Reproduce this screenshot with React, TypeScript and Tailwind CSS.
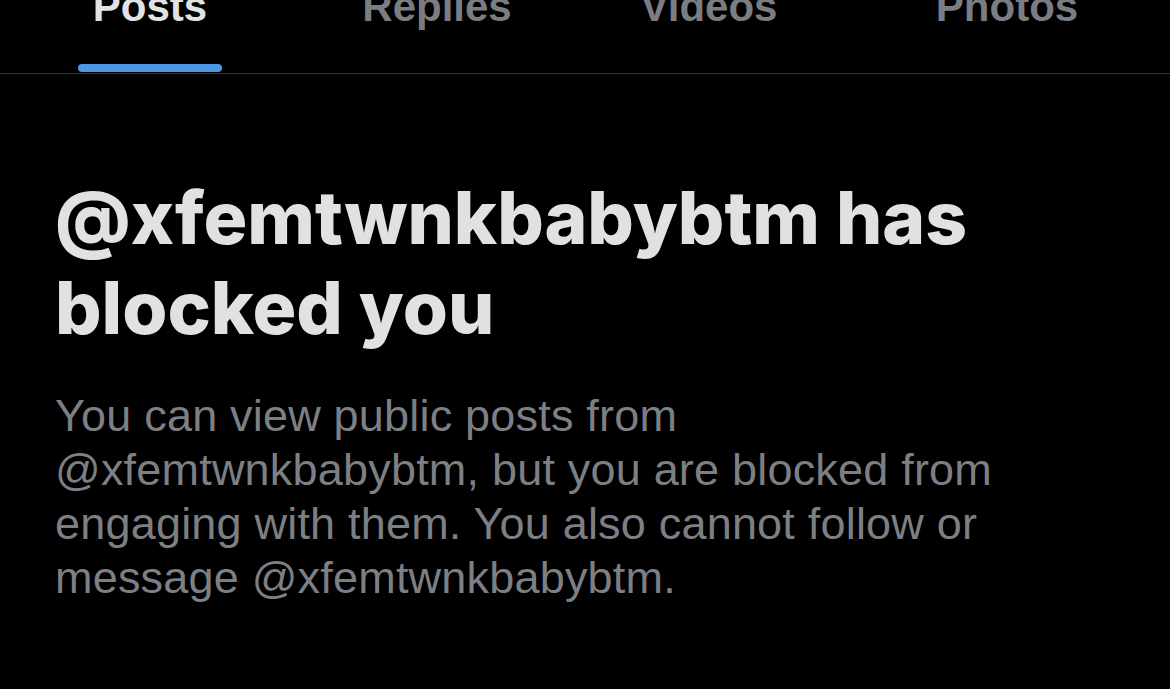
import React from "react";

const tabs = [
  { label: "Posts", w: "w-[300px]", active: true },
  { label: "Replies", w: "w-[274px]", active: false },
  { label: "Videos", w: "w-[270px]", active: false },
  { label: "Photos", w: "w-[326px]", active: false },
];

export default function App() {
  return (
    <div
      className="w-[1170px] h-[689px] bg-black overflow-hidden"
      style={{ fontFamily: '"Liberation Sans", Arial, sans-serif' }}
    >
      <div className="flex h-[74px] border-b border-[#2f3336]">
        {tabs.map((t) => (
          <div key={t.label} className={`${t.w} flex flex-col items-center`}>
            <div
              className={`-mt-[18px] text-[42px] leading-[50px] font-bold ${
                t.active ? "text-[#e1e2e3]" : "text-[#7a7d81]"
              }`}
            >
              {t.label}
            </div>
            {t.active && (
              <div className="mt-[32px] w-[144px] h-[8px] rounded-full bg-[#4a98e6]" />
            )}
          </div>
        ))}
      </div>
      <div className="pl-[55px] pt-[99px]">
        <h1
          className="text-[73px] leading-[90px] font-extrabold text-[#e1e1e1]"
          style={{ fontFamily: 'Inter, "Liberation Sans", sans-serif' }}
        >
          @xfemtwnkbabybtm has
          <br />
          blocked you
        </h1>
        <p className="mt-[36px] text-[45px] leading-[54px] tracking-[0.2px] text-[#7c7f83]">
          You can view public posts from
          <br />
          @xfemtwnkbabybtm, but you are blocked from
          <br />
          engaging with them. You also cannot follow or
          <br />
          message @xfemtwnkbabybtm.
        </p>
      </div>
    </div>
  );
}
